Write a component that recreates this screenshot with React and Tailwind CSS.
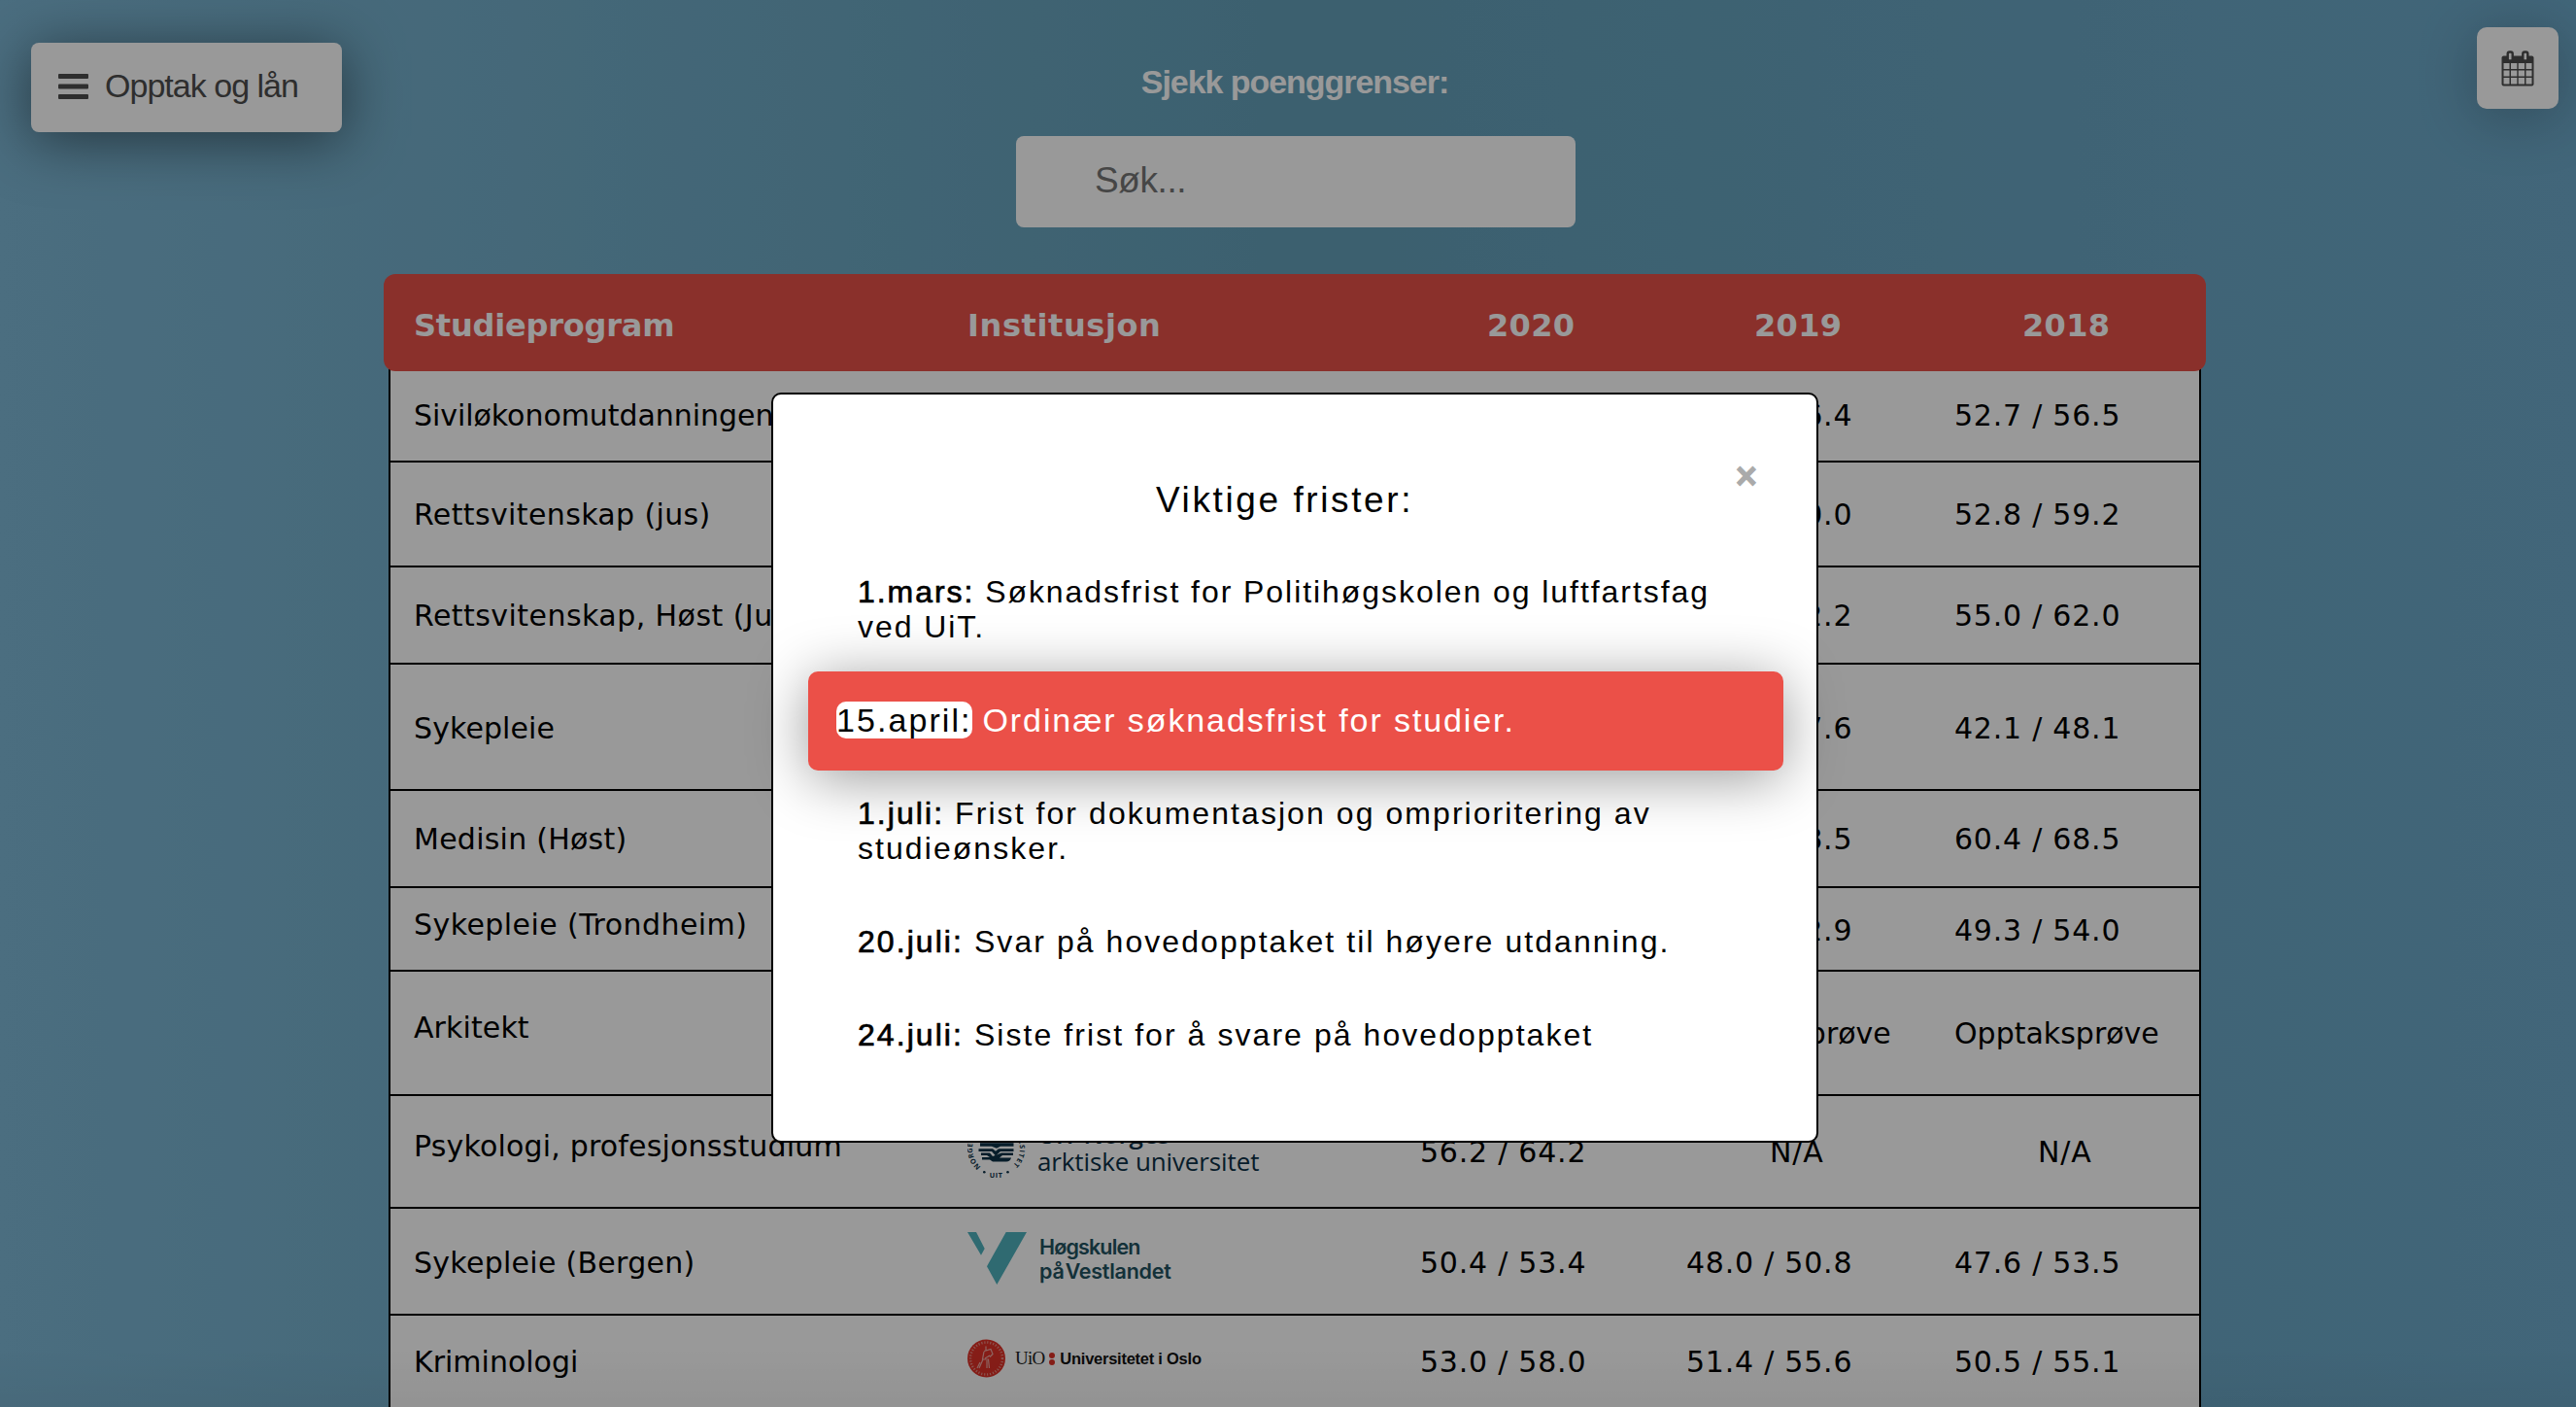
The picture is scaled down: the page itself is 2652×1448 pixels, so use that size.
const rows = [
  { name: "Siviløkonomutdanningen", y19: "53.1 / 56.4", y18: "52.7 / 56.5", h: "h-[94px]", n: "pt-[26px] tracking-[-0.05px]", v: "pt-[26px]" },
  { name: "Rettsvitenskap (jus)", y19: "53.0 / 60.0", y18: "52.8 / 59.2", h: "h-[108px]", n: "pt-[34px] tracking-[0.37px]", v: "pt-[34px]" },
  { name: "Rettsvitenskap, Høst (Jus)", y19: "55.0 / 62.2", y18: "55.0 / 62.0", h: "h-[100px]", n: "pt-[30px] tracking-[0.45px]", v: "pt-[30px]" },
  { name: "Sykepleie", y19: "42.0 / 47.6", y18: "42.1 / 48.1", h: "h-[130px]", n: "pt-[46px] tracking-[0.1px]", v: "pt-[46px]" },
  { name: "Medisin (Høst)", y19: "60.4 / 68.5", y18: "60.4 / 68.5", h: "h-[100px]", n: "pt-[30px] tracking-[0.25px]", v: "pt-[30px]" },
  { name: "Sykepleie (Trondheim)", y19: "49.0 / 52.9", y18: "49.3 / 54.0", h: "h-[86px]", n: "pt-[18px] tracking-[0.44px]", v: "pt-[24px]" },
  { name: "Arkitekt", y19: "Opptaksprøve", y18: "Opptaksprøve", h: "h-[128px]", n: "pt-[38px] tracking-[0.1px]", v: "pt-[44px]" },
  { name: "Psykologi, profesjonsstudium", logo: "uit", y20: "56.2 / 64.2", y19: "N/A", y18: "N/A", h: "h-[116px]", n: "pt-[32px] tracking-[0.18px]", v: "pt-[38px]" },
  { name: "Sykepleie (Bergen)", logo: "hvl", y20: "50.4 / 53.4", y19: "48.0 / 50.8", y18: "47.6 / 53.5", h: "h-[110px]", n: "pt-[36px] tracking-[0.28px]", v: "pt-[36px]" },
  { name: "Kriminologi", logo: "uio", y20: "53.0 / 58.0", y19: "51.4 / 55.6", y18: "50.5 / 55.1", h: "h-[110px]", n: "pt-[28px]", v: "pt-[28px]" },
];

function UitLogo() {
  return (
    <div className="flex pt-[24px]">
      <svg width="60" height="62" viewBox="0 0 60 62" className="shrink-0 text-[#0d3147]">
        <defs>
          <path id="ringLeft" d="M13.750 48.770 A24.500 24.500 0 0 1 5.830 23.660" />
          <path id="ringRight" d="M25.250 5.870 A24.500 24.500 0 0 1 46.520 47.610" />
        </defs>
        <g fill="currentColor">
          <path d="M13 19.500h34v2.800H13z" />
          <path d="M13 24.200H47.500v3.600H34l-4 2-5-2H13z" />
          <path d="M11.500 30.200H26l3 2.600 3-2.600h15.500v2.800H34l-5 4.500-4-4.500H11.500z" />
          <path d="M14 34.400h9l3 3.600 9-3.600h12v2.600H36l-3 2.500h12q-1 4-5 4H26l-3-2h-8v-2.500h8l-3-2h-6z" />
          <circle cx="17.300" cy="54.300" r="1.300" />
          <circle cx="41.500" cy="54.300" r="1.300" />
        </g>
        <g fill="currentColor" fontFamily="Open Sans, sans-serif" fontWeight="700" fontSize="7.200">
          <text letterSpacing="0.200">
            <textPath href="#ringLeft">NORGES</textPath>
          </text>
          <text letterSpacing="0.900">
            <textPath href="#ringRight" startOffset="100%" textAnchor="end">UNIVERSITET</textPath>
          </text>
          <text x="29.700" y="59.500" textAnchor="middle" letterSpacing="0.600">UIT</text>
        </g>
      </svg>
      <div className="ml-[12px] mt-px whitespace-nowrap font-['Open_Sans',sans-serif] text-[26px] leading-[28px] tracking-[-0.12px] text-[#0d3147]">
        <div className="font-semibold">UiT Norges</div>
        <div>arktiske universitet</div>
      </div>
    </div>
  );
}

function HvlLogo() {
  return (
    <div className="flex pt-[24px]">
      <svg width="62" height="54" viewBox="0 0 62 54" className="shrink-0" fill="#4fb1bd">
        <path d="M0 0h9l8.700 17-3.700 6.700z M39.700 0H61L30.300 54 20 35.300z" />
      </svg>
      <div className="ml-[12px] mt-[3px] whitespace-nowrap font-['Inter',sans-serif] text-[21.500px] font-semibold leading-[25px] text-[#22525f]">
        <div className="tracking-[-0.85px]">Høgskulen</div>
        <div className="tracking-[-0.25px] [word-spacing:-4px]">på Vestlandet</div>
      </div>
    </div>
  );
}

function UioLogo() {
  return (
    <div className="flex items-center pt-[24px]">
      <svg width="40" height="40" viewBox="0 0 40 40" className="shrink-0">
        <circle cx="19.500" cy="20" r="19.500" fill="#df3127" />
        <circle cx="19.500" cy="20" r="16.500" fill="none" stroke="#e98c84" strokeWidth="2.500" strokeDasharray="1.200 1.800" />
        <path d="M19 7.500v4 M17 12.500l7-2 2 5-3 3M17 13l-1.500 8 6 0 1 9M16 21l-4 9M20 22v8M13 24l-3 6M23 17l-5 3" fill="none" stroke="#efa9a3" strokeWidth="1.200" />
      </svg>
      <div className="ml-[9px] flex items-center whitespace-nowrap">
        <span className="font-['Liberation_Serif',serif] text-[19px] tracking-[-0.8px] text-[#222]">UiO</span>
        <span className="ml-[5px] mr-[5px] flex flex-col gap-px">
          <span className="size-[6px] rounded-full bg-[#df3127]" />
          <span className="size-[6px] rounded-full bg-[#df3127]" />
        </span>
        <span className="font-['Liberation_Sans',sans-serif] text-[16.500px] font-bold tracking-[-0.25px] text-[#111]">Universitetet i Oslo</span>
      </div>
    </div>
  );
}

const logos = { uit: UitLogo, hvl: HvlLogo, uio: UioLogo };

const valueStyles = {
  "N/A": "pl-[87px] tracking-[0.9px]",
  "Opptaksprøve": "pl-px",
};

function Value({ text, pad }) {
  return <div className={`${pad} ${valueStyles[text] ?? "pl-px tracking-[0.77px]"} whitespace-nowrap`}>{text}</div>;
}

function Row({ row }) {
  const Logo = logos[row.logo];
  return (
    <div className={`grid grid-cols-[570px_465px_274px_276px_1fr] border-b-2 border-black pl-[24px] ${row.h}`}>
      <div className={`${row.n} whitespace-nowrap`}>{row.name}</div>
      <div>{Logo && <Logo />}</div>
      <Value text={row.y20} pad={row.v} />
      <Value text={row.y19} pad={row.v} />
      <Value text={row.y18} pad={row.v} />
    </div>
  );
}

function CalendarIcon() {
  return (
    <svg width="34" height="37" viewBox="0 0 34 37" className="text-[#4d4d4d]">
      <path d="M2.500 5.500h29q2 0 2 2v27q0 2-2 2h-29q-2 0-2-2v-27q0-2 2-2z" fill="currentColor" />
      <g fill="#fff">
        <path d="M2.500 13H8.500V19H2.500z M10 13H16.300V19H10z M17.700 13H24V19H17.700z M25.500 13H31.500V19H25.500z" />
        <path d="M2.500 20.500H8.500V26.500H2.500z M10 20.500H16.300V26.500H10z M17.700 20.500H24V26.500H17.700z M25.500 20.500H31.500V26.500H25.500z" />
        <path d="M2.500 28H8.500V34.500H2.500z M10 28H16.300V34.500H10z M17.700 28H24V34.500H17.700z M25.500 28H31.500V34.500H25.500z" />
      </g>
      <rect x="6.700" y="1.500" width="5" height="9" rx="1.800" fill="#fff" stroke="currentColor" strokeWidth="2.400" />
      <rect x="22.300" y="1.500" width="5" height="9" rx="1.800" fill="#fff" stroke="currentColor" strokeWidth="2.400" />
    </svg>
  );
}

function Deadline({ date, className = "", children }) {
  return (
    <p className={`pl-[87px] pr-[60px] ${className}`}>
      <span className="[-webkit-text-stroke:0.7px_black]">{date}:</span> {children}
    </p>
  );
}

export default function App() {
  return (
    <div className="relative h-[1448px] w-[2652px] overflow-hidden bg-[linear-gradient(90deg,#7db7d5_0%,#64a0b9_51%,#6eaacb_100%)] font-['Liberation_Sans',Arial,sans-serif]">
      <div className="flex items-start justify-between pl-[32px] pr-[18px]">
        <button className="mt-[44px] flex h-[92px] w-[320px] items-center rounded-[8px] bg-white pl-[28px] text-[34px] text-[#4d4d4d] shadow-[0_8px_60px_rgba(0,0,0,0.5)]">
          <svg width="31" height="26" viewBox="0 0 31 26" fill="currentColor" className="-mt-[2px]">
            <rect width="31" height="5" rx="1" />
            <rect y="10.500" width="31" height="5" rx="1" />
            <rect y="21" width="31" height="5" rx="1" />
          </svg>
          <span className="-mt-[3px] ml-[17px] whitespace-nowrap tracking-[-0.98px]">Opptak og lån</span>
        </button>
        <div className="ml-[694px] mr-auto w-[576px] pt-[64px] text-center">
          <div className="pr-[2px] text-[34px] font-bold leading-[40px] tracking-[-1.05px] text-white">Sjekk poenggrenser:</div>
          <div className="mt-[36px] flex h-[94px] items-center rounded-[8px] bg-white pb-[2px] pl-[81px] text-[37px] tracking-[-0.4px] text-[#757575]">Søk...</div>
        </div>
        <button className="mt-[28px] flex size-[84px] items-center justify-center rounded-[10px] bg-white shadow-[0_8px_60px_rgba(0,0,0,0.25)]">
          <CalendarIcon />
        </button>
      </div>

      <div className="ml-[400px] mt-[48px] w-[1866px] font-['DejaVu_Sans',Verdana,sans-serif] text-[30px] leading-[40px] text-black">
        <div className="relative z-10 mx-[-5px] grid h-[100px] grid-cols-[570px_465px_274px_276px_1fr] items-center rounded-[12px] bg-[#e65049] pl-[31px] pt-[5px] text-[32px] font-bold text-white">
          <div className="tracking-[-0.2px]">Studieprogram</div>
          <div className="tracking-[0.6px]">Institusjon</div>
          <div className="pl-[70px] tracking-[0.3px]">2020</div>
          <div className="pl-[71px] tracking-[0.3px]">2019</div>
          <div className="pl-[71px] tracking-[0.3px]">2018</div>
        </div>
        <div className="mt-[-4px] border-x-2 border-black bg-white pt-[4px]">
          {rows.map((r) => (
            <Row key={r.name} row={r} />
          ))}
        </div>
      </div>

      <div className="absolute inset-x-0 bottom-0 z-10 h-[60px] bg-linear-to-b from-transparent to-black/4" />

      <div className="absolute inset-0 z-20 bg-black/40">
        <div className="ml-[794px] mt-[404px] h-[772px] w-[1078px] rounded-[10px] border-2 border-black bg-white text-[32px] leading-[36px] tracking-[2.06px] text-black">
          <div className="mr-[61px] mt-[64px] flex h-[40px] items-center justify-end text-[38px] font-bold tracking-normal text-[#aaa] [-webkit-text-stroke:1px_#aaa]">×</div>
          <h2 className="mt-[-17px] pr-[21px] text-center text-[37px] leading-[44px] tracking-[2.6px]">Viktige frister:</h2>
          <div className="mt-[54px]">
            <Deadline date="1.mars" className="tracking-[1.94px]">Søknadsfrist for Politihøgskolen og luftfartsfag ved UiT.</Deadline>
          </div>
          <div className="ml-[36px] mt-[28px] flex h-[102px] w-[1004px] items-center rounded-[10px] bg-[#eb5048] pb-[2px] pl-[29px] text-[34px] leading-[38px] text-white shadow-[0_8px_60px_rgba(0,0,0,0.4)]">
            <span className="rounded-[10px] bg-white text-black">15.april:</span>
            <span className="ml-[11px] tracking-[1.9px]">Ordinær søknadsfrist for studier.</span>
          </div>
          <div className="mt-[26px] flex flex-col gap-[60px]">
            <Deadline date="1.juli">Frist for dokumentasjon og omprioritering av studieønsker.</Deadline>
            <Deadline date="20.juli">Svar på hovedopptaket til høyere utdanning.</Deadline>
            <Deadline date="24.juli">Siste frist for å svare på hovedopptaket</Deadline>
          </div>
        </div>
      </div>
    </div>
  );
}
